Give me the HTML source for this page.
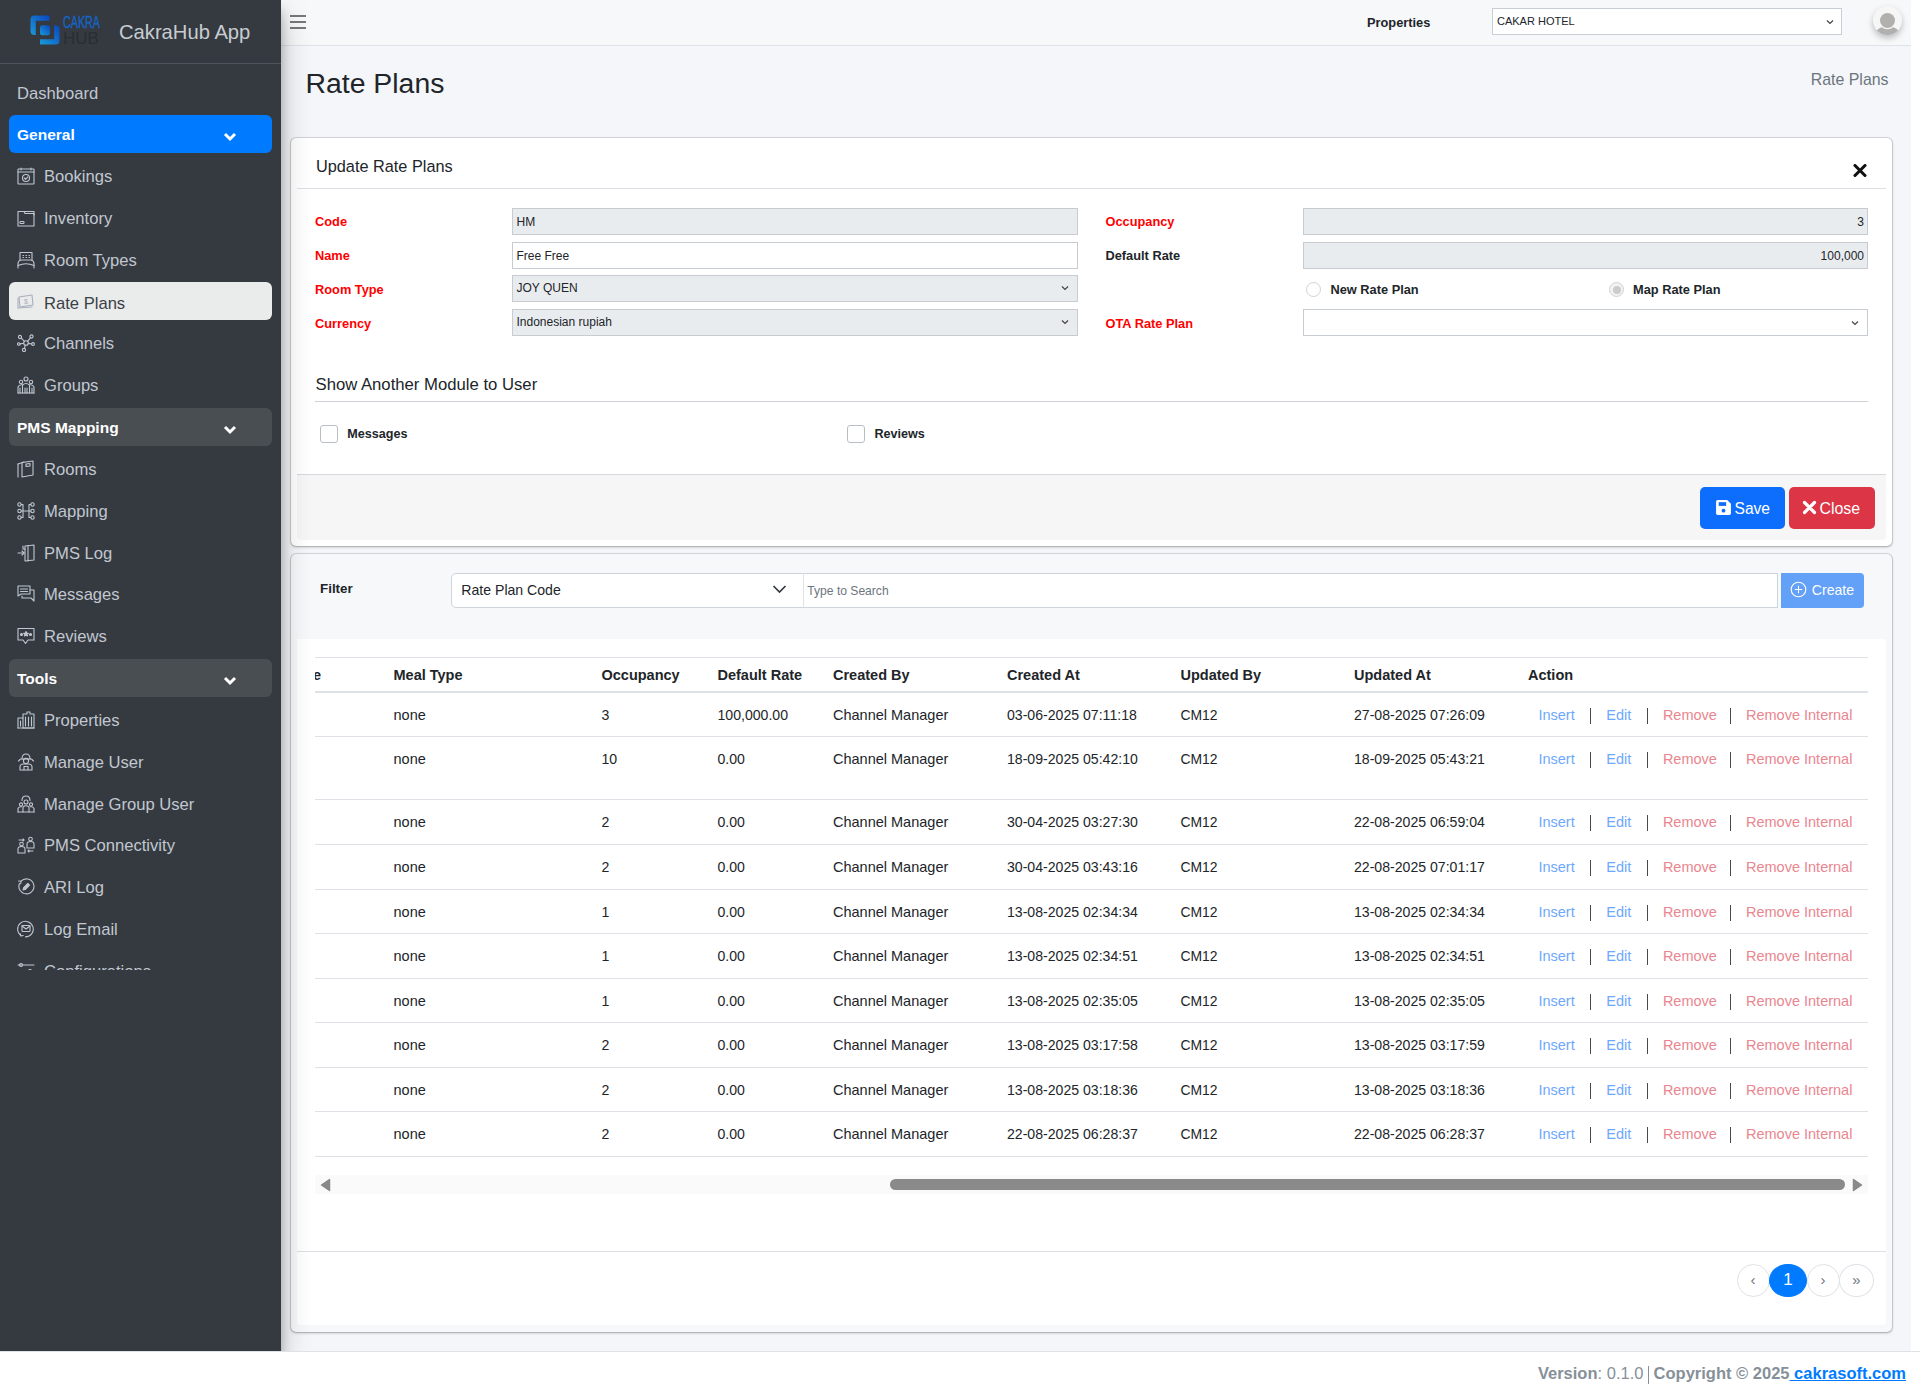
<!DOCTYPE html>
<html>
<head>
<meta charset="utf-8">
<style>
*{box-sizing:border-box;margin:0;padding:0}
html,body{width:1920px;height:1395px;overflow:hidden;background:#fff;font-family:"Liberation Sans",sans-serif;color:#212529}
.abs{position:absolute}
#sidebar{position:absolute;left:0;top:0;width:281px;height:1351px;background:#343a40;z-index:5;box-shadow:0 14px 28px rgba(0,0,0,.25),0 10px 10px rgba(0,0,0,.22)}
#brand{position:absolute;left:0;top:0;width:281px;height:64px;border-bottom:1px solid #4b545c}
#brand .t{position:absolute;left:119px;top:21.4px;font-size:20.2px;color:#c8ccd1;white-space:nowrap;letter-spacing:0}
#nav{position:absolute;left:0;top:64px;width:281px;height:906px;overflow:hidden}
.it{position:absolute;left:9px;width:263px;height:38px;border-radius:6px;color:#c2c7d0;font-size:16.6px;white-space:nowrap}
.it span{position:absolute;left:35px;top:10px}
.it svg{position:absolute;left:8px;top:10px}
.it.hd span,.it.plain span,.it.blue span{left:8px;top:11.3px}
.it.hd{background:#494e53;color:#fff;font-weight:bold;font-size:15.5px}
.it.blue{background:#007bff;color:#fff;font-weight:bold;font-size:15.5px}
.it.active{background:#eaebeb;color:#3a4046}
.it.active span{top:11.2px}
.it .chev{position:absolute;left:214px;top:17px}
#navbar{position:absolute;left:281px;top:0;width:1630px;height:46px;background:#f7f8fa;border-bottom:1px solid #dfe2e6}
#content{position:absolute;left:281px;top:46px;width:1630px;height:1305px;background:#f4f6f9}
#footer{position:absolute;left:0;top:1351px;width:1920px;height:44px;background:#fff;border-top:1px solid #dee2e6;z-index:6}
.t{white-space:nowrap;line-height:normal}
.card{border-radius:5px;box-shadow:0 0 0 1px rgba(0,0,0,.09),0 0 1px rgba(0,0,0,.2),0 1px 3px rgba(0,0,0,.25)}
.inp{border:1px solid #c7ccd2}
.btn{border-radius:5px}
.pg{border:1px solid #dee2e6;border-radius:50%;background:#fff;color:#6c757d;font-size:15px;text-align:center;line-height:29px}
.pg.act{background:#007bff;border-color:#007bff;color:#fff;font-size:17px;line-height:30px}
</style>
</head>
<body>
<div id="content"></div>
<div id="navbar">
  <div class="abs" style="left:9px;top:15px;width:16px;height:2px;background:#787878"></div>
  <div class="abs" style="left:9px;top:21px;width:16px;height:2px;background:#787878"></div>
  <div class="abs" style="left:9px;top:26.5px;width:16px;height:2px;background:#787878"></div>
  <div class="abs" style="left:1086px;top:14.7px;font-size:12.8px;font-weight:bold;color:#212529">Properties</div>
  <div class="abs" style="left:1211px;top:8px;width:350px;height:27px;background:#fff;border:1px solid #c9ced4">
    <div class="abs" style="left:4px;top:5.7px;font-size:11px;color:#212529">CAKAR HOTEL</div>
    <svg class="abs" style="left:333px;top:9.5px" width="8" height="6" viewBox="0 0 8 6"><path d="M1 1.5 L4 4.5 L7 1.5" fill="none" stroke="#444" stroke-width="1.2"/></svg>
  </div>
  <div class="abs" style="left:1592px;top:6px;width:29px;height:29px;border-radius:50%;background:#f6f6f6;box-shadow:0 3px 6px rgba(0,0,0,.25);overflow:hidden">
    <div class="abs" style="left:7px;top:6.5px;width:15px;height:15px;border-radius:50%;background:#b1b0af;box-shadow:0 0 0 1px #f6f6f6"></div>
    <div class="abs" style="left:2px;top:20px;width:25px;height:18px;border-radius:50% 50% 0 0;background:#b1b0af"></div>
    <div class="abs" style="left:7px;top:6.5px;width:15px;height:15px;border-radius:50%;background:#b1b0af;box-shadow:0 0 0 1.2px #f6f6f6"></div>
  </div>
</div>
<div id="footer"></div>
<!--CONTENT-->
<div class="abs t" style="left:305.5px;top:66.8px;font-size:28.4px;color:#212529">Rate Plans</div>
<div class="abs t" style="right:31.5px;top:70.6px;font-size:15.9px;color:#6c757d">Rate Plans</div>
<div class="abs card" style="left:291px;top:138px;width:1601px;height:408px;background:#fff"></div>
<div class="abs t" style="left:316.0px;top:157.0px;font-size:16.3px;color:#212529">Update Rate Plans</div>
<svg class="abs" style="left:1853px;top:164px" width="14" height="13" viewBox="0 0 14 13"><path d="M2 1.5 L12 11.5 M12 1.5 L2 11.5" stroke="#111" stroke-width="3.1" stroke-linecap="round"/></svg>
<div class="abs" style="left:297px;top:188px;width:1589px;height:1px;background:#dcdfe3"></div>
<div class="abs t" style="left:315.0px;top:213.9px;font-size:12.8px;font-weight:bold;color:#ff0000">Code</div>
<div class="abs t" style="left:315.0px;top:247.8px;font-size:12.8px;font-weight:bold;color:#ff0000">Name</div>
<div class="abs t" style="left:315.0px;top:281.6px;font-size:12.8px;font-weight:bold;color:#ff0000">Room Type</div>
<div class="abs t" style="left:315.0px;top:315.5px;font-size:12.8px;font-weight:bold;color:#ff0000">Currency</div>
<div class="abs inp" style="left:512px;top:208px;width:566px;height:27px;background:#e9ecef"></div>
<div class="abs t" style="left:516.5px;top:214.6px;font-size:12px;color:#212529">HM</div>
<div class="abs inp" style="left:512px;top:242px;width:566px;height:27px;background:#fff"></div>
<div class="abs t" style="left:516.5px;top:248.6px;font-size:12px;color:#212529">Free Free</div>
<div class="abs inp" style="left:512px;top:275px;width:566px;height:27px;background:#e9ecef"></div>
<div class="abs t" style="left:516.5px;top:281.2px;font-size:12px;color:#212529">JOY QUEN</div>
<svg class="abs" style="left:1061px;top:284.5px" width="8" height="6" viewBox="0 0 8 6"><path d="M1 1.5 L4 4.5 L7 1.5" fill="none" stroke="#444" stroke-width="1.2"/></svg>
<div class="abs inp" style="left:512px;top:309px;width:566px;height:27px;background:#e9ecef"></div>
<div class="abs t" style="left:516.5px;top:315.2px;font-size:12px;color:#212529">Indonesian rupiah</div>
<svg class="abs" style="left:1061px;top:318.5px" width="8" height="6" viewBox="0 0 8 6"><path d="M1 1.5 L4 4.5 L7 1.5" fill="none" stroke="#444" stroke-width="1.2"/></svg>
<div class="abs t" style="left:1105.5px;top:213.9px;font-size:12.8px;font-weight:bold;color:#ff0000">Occupancy</div>
<div class="abs t" style="left:1105.5px;top:247.8px;font-size:12.8px;font-weight:bold;color:#212529">Default Rate</div>
<div class="abs t" style="left:1105.5px;top:315.5px;font-size:12.8px;font-weight:bold;color:#ff0000">OTA Rate Plan</div>
<div class="abs inp" style="left:1303px;top:208px;width:565px;height:27px;background:#e9ecef"></div>
<div class="abs t" style="right:56.0px;top:214.6px;font-size:12px;color:#212529">3</div>
<div class="abs inp" style="left:1303px;top:242px;width:565px;height:27px;background:#e9ecef"></div>
<div class="abs t" style="right:56.0px;top:248.6px;font-size:12px;color:#212529">100,000</div>
<div class="abs inp" style="left:1303px;top:309px;width:565px;height:27px;background:#fff"></div>
<svg class="abs" style="left:1851px;top:320px" width="8" height="6" viewBox="0 0 8 6"><path d="M1 1.5 L4 4.5 L7 1.5" fill="none" stroke="#444" stroke-width="1.2"/></svg>
<div class="abs" style="left:1306px;top:282px;width:15px;height:15px;border-radius:50%;border:1px solid #cfd2d6;background:#fff"></div>
<div class="abs t" style="left:1330.5px;top:282.4px;font-size:12.8px;font-weight:bold;color:#212529">New Rate Plan</div>
<div class="abs" style="left:1609px;top:282px;width:15px;height:15px;border-radius:50%;border:1px solid #cfd2d6;background:#f2f2f2"><div class="abs" style="left:2.5px;top:2.5px;width:8px;height:8px;border-radius:50%;background:#cbcbcb"></div></div>
<div class="abs t" style="left:1633.0px;top:282.4px;font-size:12.8px;font-weight:bold;color:#212529">Map Rate Plan</div>
<div class="abs t" style="left:315.5px;top:374.6px;font-size:16.7px;color:#212529">Show Another Module to User</div>
<div class="abs" style="left:315px;top:401px;width:1553px;height:1px;background:#ced2d6"></div>
<div class="abs" style="left:320px;top:425px;width:18px;height:18px;border-radius:3px;border:1px solid #b9bec4;background:#fff"></div>
<div class="abs t" style="left:347.3px;top:427.2px;font-size:12.6px;font-weight:bold;color:#212529">Messages</div>
<div class="abs" style="left:847px;top:425px;width:18px;height:18px;border-radius:3px;border:1px solid #b9bec4;background:#fff"></div>
<div class="abs t" style="left:874.4px;top:427.2px;font-size:12.6px;font-weight:bold;color:#212529">Reviews</div>
<div class="abs" style="left:297px;top:474px;width:1589px;height:66px;background:#f6f6f6;border-top:1px solid #d5d8dc;border-radius:0 0 4px 4px"></div>
<div class="abs btn" style="left:1700px;top:487px;width:85px;height:42px;background:#0d6efd"></div>
<svg class="abs" style="left:1714.5px;top:499px" width="17" height="17" viewBox="0 0 16 16"><path d="M1 2.5 Q1 1 2.5 1 L11.5 1 L15 4.5 L15 13.5 Q15 15 13.5 15 L2.5 15 Q1 15 1 13.5 Z" fill="#fff"/><rect x="3.5" y="3" width="7" height="3.5" fill="#0d6efd"/><circle cx="8" cy="11" r="1.8" fill="#0d6efd"/></svg>
<div class="abs t" style="left:1734.5px;top:500.1px;font-size:15.6px;color:#fff">Save</div>
<div class="abs btn" style="left:1789px;top:487px;width:86px;height:42px;background:#dc3545"></div>
<svg class="abs" style="left:1802px;top:500px" width="15" height="15" viewBox="0 0 15 15"><path d="M2.5 2.5 L12.5 12.5 M12.5 2.5 L2.5 12.5" stroke="#fff" stroke-width="3.2" stroke-linecap="round"/></svg>
<div class="abs t" style="left:1819.5px;top:500.4px;font-size:15.9px;color:#fff">Close</div>
<div class="abs card" style="left:291px;top:554px;width:1601px;height:778px;background:#f7f8fa"></div>
<div class="abs t" style="left:320.0px;top:581.4px;font-size:13.4px;font-weight:bold;color:#212529">Filter</div>
<div class="abs" style="left:450.5px;top:573px;width:353px;height:35px;background:#fff;border:1px solid #ced4da;border-radius:5px 0 0 5px"></div>
<div class="abs t" style="left:461.3px;top:582.0px;font-size:14.1px;color:#212529">Rate Plan Code</div>
<svg class="abs" style="left:772px;top:584px" width="15" height="10" viewBox="0 0 15 10"><path d="M1.5 2 L7.5 8 L13.5 2" fill="none" stroke="#343a40" stroke-width="1.7"/></svg>
<div class="abs" style="left:802.5px;top:573px;width:975.5px;height:35px;background:#fff;border:1px solid #ced4da;border-left-color:#dfe3e7"></div>
<div class="abs t" style="left:807.3px;top:583.9px;font-size:12.1px;color:#6c757d">Type to Search</div>
<div class="abs" style="left:1781px;top:573px;width:83px;height:35px;background:#63a0f8;border-radius:0 4px 4px 0"></div>
<svg class="abs" style="left:1790px;top:581px" width="17" height="17" viewBox="0 0 17 17"><circle cx="8.5" cy="8.5" r="7.3" fill="none" stroke="#fff" stroke-width="1.1"/><path d="M8.5 4.8 L8.5 12.2 M4.8 8.5 L12.2 8.5" stroke="#fff" stroke-width="1.1"/></svg>
<div class="abs t" style="left:1811.8px;top:582.0px;font-size:14.1px;color:#fff">Create</div>
<div class="abs" style="left:297px;top:639px;width:1589px;height:686px;background:#fff;border-radius:0 0 4px 4px"></div>
<div class="abs" style="left:315px;top:657px;width:1553px;height:1px;background:#dee2e6"></div>
<div class="abs" style="left:315px;top:691px;width:1553px;height:2px;background:#dee2e6"></div>
<div class="abs" style="left:315px;top:650px;width:6px;height:40px;overflow:hidden"><div class="abs t" style="right:0;top:16.5px;font-size:14.5px;font-weight:bold;color:#212529">Name</div></div>
<div class="abs t" style="left:393.5px;top:666.5px;font-size:14.5px;font-weight:bold;color:#212529">Meal Type</div>
<div class="abs t" style="left:601.5px;top:666.5px;font-size:14.5px;font-weight:bold;color:#212529">Occupancy</div>
<div class="abs t" style="left:717.5px;top:666.5px;font-size:14.5px;font-weight:bold;color:#212529">Default Rate</div>
<div class="abs t" style="left:833.0px;top:666.5px;font-size:14.5px;font-weight:bold;color:#212529">Created By</div>
<div class="abs t" style="left:1007.0px;top:666.5px;font-size:14.5px;font-weight:bold;color:#212529">Created At</div>
<div class="abs t" style="left:1180.5px;top:666.5px;font-size:14.5px;font-weight:bold;color:#212529">Updated By</div>
<div class="abs t" style="left:1354.0px;top:666.5px;font-size:14.5px;font-weight:bold;color:#212529">Updated At</div>
<div class="abs t" style="left:1528.0px;top:666.5px;font-size:14.5px;font-weight:bold;color:#212529">Action</div>
<div class="abs" style="left:315px;top:736px;width:1553px;height:1px;background:#dee2e6"></div>
<div class="abs" style="left:315px;top:799px;width:1553px;height:1px;background:#dee2e6"></div>
<div class="abs" style="left:315px;top:844px;width:1553px;height:1px;background:#dee2e6"></div>
<div class="abs" style="left:315px;top:889px;width:1553px;height:1px;background:#dee2e6"></div>
<div class="abs" style="left:315px;top:933px;width:1553px;height:1px;background:#dee2e6"></div>
<div class="abs" style="left:315px;top:978px;width:1553px;height:1px;background:#dee2e6"></div>
<div class="abs" style="left:315px;top:1022px;width:1553px;height:1px;background:#dee2e6"></div>
<div class="abs" style="left:315px;top:1067px;width:1553px;height:1px;background:#dee2e6"></div>
<div class="abs" style="left:315px;top:1111px;width:1553px;height:1px;background:#dee2e6"></div>
<div class="abs" style="left:315px;top:1156px;width:1553px;height:1px;background:#dee2e6"></div>
<div class="abs t" style="left:393.5px;top:706.6px;font-size:14.5px;color:#212529">none</div>
<div class="abs t" style="left:601.5px;top:707.0px;font-size:14.1px;color:#212529">3</div>
<div class="abs t" style="left:717.5px;top:707.0px;font-size:14.1px;color:#212529">100,000.00</div>
<div class="abs t" style="left:833.0px;top:706.6px;font-size:14.5px;color:#212529">Channel Manager</div>
<div class="abs t" style="left:1007.0px;top:707.0px;font-size:14.1px;color:#212529">03-06-2025 07:11:18</div>
<div class="abs t" style="left:1180.5px;top:707.2px;font-size:13.9px;color:#212529">CM12</div>
<div class="abs t" style="left:1354.0px;top:707.0px;font-size:14.1px;color:#212529">27-08-2025 07:26:09</div>
<div class="abs t" style="left:1538.4px;top:706.6px;font-size:14.5px;color:#6ea8fe">Insert</div>
<div class="abs t" style="left:1606.3px;top:706.6px;font-size:14.5px;color:#6ea8fe">Edit</div>
<div class="abs t" style="left:1662.9px;top:706.6px;font-size:14.5px;color:#ea868f">Remove</div>
<div class="abs t" style="left:1746.0px;top:706.6px;font-size:14.5px;color:#ea868f">Remove Internal</div>
<div class="abs" style="left:1590.2px;top:708px;width:1.3px;height:16px;background:#444a50"></div>
<div class="abs" style="left:1646.5px;top:708px;width:1.3px;height:16px;background:#444a50"></div>
<div class="abs" style="left:1730px;top:708px;width:1.3px;height:16px;background:#444a50"></div>
<div class="abs t" style="left:393.5px;top:750.6px;font-size:14.5px;color:#212529">none</div>
<div class="abs t" style="left:601.5px;top:751.0px;font-size:14.1px;color:#212529">10</div>
<div class="abs t" style="left:717.5px;top:751.0px;font-size:14.1px;color:#212529">0.00</div>
<div class="abs t" style="left:833.0px;top:750.6px;font-size:14.5px;color:#212529">Channel Manager</div>
<div class="abs t" style="left:1007.0px;top:751.0px;font-size:14.1px;color:#212529">18-09-2025 05:42:10</div>
<div class="abs t" style="left:1180.5px;top:751.2px;font-size:13.9px;color:#212529">CM12</div>
<div class="abs t" style="left:1354.0px;top:751.0px;font-size:14.1px;color:#212529">18-09-2025 05:43:21</div>
<div class="abs t" style="left:1538.4px;top:750.6px;font-size:14.5px;color:#6ea8fe">Insert</div>
<div class="abs t" style="left:1606.3px;top:750.6px;font-size:14.5px;color:#6ea8fe">Edit</div>
<div class="abs t" style="left:1662.9px;top:750.6px;font-size:14.5px;color:#ea868f">Remove</div>
<div class="abs t" style="left:1746.0px;top:750.6px;font-size:14.5px;color:#ea868f">Remove Internal</div>
<div class="abs" style="left:1590.2px;top:752px;width:1.3px;height:16px;background:#444a50"></div>
<div class="abs" style="left:1646.5px;top:752px;width:1.3px;height:16px;background:#444a50"></div>
<div class="abs" style="left:1730px;top:752px;width:1.3px;height:16px;background:#444a50"></div>
<div class="abs t" style="left:393.5px;top:813.6px;font-size:14.5px;color:#212529">none</div>
<div class="abs t" style="left:601.5px;top:814.0px;font-size:14.1px;color:#212529">2</div>
<div class="abs t" style="left:717.5px;top:814.0px;font-size:14.1px;color:#212529">0.00</div>
<div class="abs t" style="left:833.0px;top:813.6px;font-size:14.5px;color:#212529">Channel Manager</div>
<div class="abs t" style="left:1007.0px;top:814.0px;font-size:14.1px;color:#212529">30-04-2025 03:27:30</div>
<div class="abs t" style="left:1180.5px;top:814.2px;font-size:13.9px;color:#212529">CM12</div>
<div class="abs t" style="left:1354.0px;top:814.0px;font-size:14.1px;color:#212529">22-08-2025 06:59:04</div>
<div class="abs t" style="left:1538.4px;top:813.6px;font-size:14.5px;color:#6ea8fe">Insert</div>
<div class="abs t" style="left:1606.3px;top:813.6px;font-size:14.5px;color:#6ea8fe">Edit</div>
<div class="abs t" style="left:1662.9px;top:813.6px;font-size:14.5px;color:#ea868f">Remove</div>
<div class="abs t" style="left:1746.0px;top:813.6px;font-size:14.5px;color:#ea868f">Remove Internal</div>
<div class="abs" style="left:1590.2px;top:815px;width:1.3px;height:16px;background:#444a50"></div>
<div class="abs" style="left:1646.5px;top:815px;width:1.3px;height:16px;background:#444a50"></div>
<div class="abs" style="left:1730px;top:815px;width:1.3px;height:16px;background:#444a50"></div>
<div class="abs t" style="left:393.5px;top:858.6px;font-size:14.5px;color:#212529">none</div>
<div class="abs t" style="left:601.5px;top:859.0px;font-size:14.1px;color:#212529">2</div>
<div class="abs t" style="left:717.5px;top:859.0px;font-size:14.1px;color:#212529">0.00</div>
<div class="abs t" style="left:833.0px;top:858.6px;font-size:14.5px;color:#212529">Channel Manager</div>
<div class="abs t" style="left:1007.0px;top:859.0px;font-size:14.1px;color:#212529">30-04-2025 03:43:16</div>
<div class="abs t" style="left:1180.5px;top:859.2px;font-size:13.9px;color:#212529">CM12</div>
<div class="abs t" style="left:1354.0px;top:859.0px;font-size:14.1px;color:#212529">22-08-2025 07:01:17</div>
<div class="abs t" style="left:1538.4px;top:858.6px;font-size:14.5px;color:#6ea8fe">Insert</div>
<div class="abs t" style="left:1606.3px;top:858.6px;font-size:14.5px;color:#6ea8fe">Edit</div>
<div class="abs t" style="left:1662.9px;top:858.6px;font-size:14.5px;color:#ea868f">Remove</div>
<div class="abs t" style="left:1746.0px;top:858.6px;font-size:14.5px;color:#ea868f">Remove Internal</div>
<div class="abs" style="left:1590.2px;top:860px;width:1.3px;height:16px;background:#444a50"></div>
<div class="abs" style="left:1646.5px;top:860px;width:1.3px;height:16px;background:#444a50"></div>
<div class="abs" style="left:1730px;top:860px;width:1.3px;height:16px;background:#444a50"></div>
<div class="abs t" style="left:393.5px;top:903.6px;font-size:14.5px;color:#212529">none</div>
<div class="abs t" style="left:601.5px;top:904.0px;font-size:14.1px;color:#212529">1</div>
<div class="abs t" style="left:717.5px;top:904.0px;font-size:14.1px;color:#212529">0.00</div>
<div class="abs t" style="left:833.0px;top:903.6px;font-size:14.5px;color:#212529">Channel Manager</div>
<div class="abs t" style="left:1007.0px;top:904.0px;font-size:14.1px;color:#212529">13-08-2025 02:34:34</div>
<div class="abs t" style="left:1180.5px;top:904.2px;font-size:13.9px;color:#212529">CM12</div>
<div class="abs t" style="left:1354.0px;top:904.0px;font-size:14.1px;color:#212529">13-08-2025 02:34:34</div>
<div class="abs t" style="left:1538.4px;top:903.6px;font-size:14.5px;color:#6ea8fe">Insert</div>
<div class="abs t" style="left:1606.3px;top:903.6px;font-size:14.5px;color:#6ea8fe">Edit</div>
<div class="abs t" style="left:1662.9px;top:903.6px;font-size:14.5px;color:#ea868f">Remove</div>
<div class="abs t" style="left:1746.0px;top:903.6px;font-size:14.5px;color:#ea868f">Remove Internal</div>
<div class="abs" style="left:1590.2px;top:905px;width:1.3px;height:16px;background:#444a50"></div>
<div class="abs" style="left:1646.5px;top:905px;width:1.3px;height:16px;background:#444a50"></div>
<div class="abs" style="left:1730px;top:905px;width:1.3px;height:16px;background:#444a50"></div>
<div class="abs t" style="left:393.5px;top:947.6px;font-size:14.5px;color:#212529">none</div>
<div class="abs t" style="left:601.5px;top:948.0px;font-size:14.1px;color:#212529">1</div>
<div class="abs t" style="left:717.5px;top:948.0px;font-size:14.1px;color:#212529">0.00</div>
<div class="abs t" style="left:833.0px;top:947.6px;font-size:14.5px;color:#212529">Channel Manager</div>
<div class="abs t" style="left:1007.0px;top:948.0px;font-size:14.1px;color:#212529">13-08-2025 02:34:51</div>
<div class="abs t" style="left:1180.5px;top:948.2px;font-size:13.9px;color:#212529">CM12</div>
<div class="abs t" style="left:1354.0px;top:948.0px;font-size:14.1px;color:#212529">13-08-2025 02:34:51</div>
<div class="abs t" style="left:1538.4px;top:947.6px;font-size:14.5px;color:#6ea8fe">Insert</div>
<div class="abs t" style="left:1606.3px;top:947.6px;font-size:14.5px;color:#6ea8fe">Edit</div>
<div class="abs t" style="left:1662.9px;top:947.6px;font-size:14.5px;color:#ea868f">Remove</div>
<div class="abs t" style="left:1746.0px;top:947.6px;font-size:14.5px;color:#ea868f">Remove Internal</div>
<div class="abs" style="left:1590.2px;top:949px;width:1.3px;height:16px;background:#444a50"></div>
<div class="abs" style="left:1646.5px;top:949px;width:1.3px;height:16px;background:#444a50"></div>
<div class="abs" style="left:1730px;top:949px;width:1.3px;height:16px;background:#444a50"></div>
<div class="abs t" style="left:393.5px;top:992.6px;font-size:14.5px;color:#212529">none</div>
<div class="abs t" style="left:601.5px;top:993.0px;font-size:14.1px;color:#212529">1</div>
<div class="abs t" style="left:717.5px;top:993.0px;font-size:14.1px;color:#212529">0.00</div>
<div class="abs t" style="left:833.0px;top:992.6px;font-size:14.5px;color:#212529">Channel Manager</div>
<div class="abs t" style="left:1007.0px;top:993.0px;font-size:14.1px;color:#212529">13-08-2025 02:35:05</div>
<div class="abs t" style="left:1180.5px;top:993.2px;font-size:13.9px;color:#212529">CM12</div>
<div class="abs t" style="left:1354.0px;top:993.0px;font-size:14.1px;color:#212529">13-08-2025 02:35:05</div>
<div class="abs t" style="left:1538.4px;top:992.6px;font-size:14.5px;color:#6ea8fe">Insert</div>
<div class="abs t" style="left:1606.3px;top:992.6px;font-size:14.5px;color:#6ea8fe">Edit</div>
<div class="abs t" style="left:1662.9px;top:992.6px;font-size:14.5px;color:#ea868f">Remove</div>
<div class="abs t" style="left:1746.0px;top:992.6px;font-size:14.5px;color:#ea868f">Remove Internal</div>
<div class="abs" style="left:1590.2px;top:994px;width:1.3px;height:16px;background:#444a50"></div>
<div class="abs" style="left:1646.5px;top:994px;width:1.3px;height:16px;background:#444a50"></div>
<div class="abs" style="left:1730px;top:994px;width:1.3px;height:16px;background:#444a50"></div>
<div class="abs t" style="left:393.5px;top:1036.6px;font-size:14.5px;color:#212529">none</div>
<div class="abs t" style="left:601.5px;top:1037.0px;font-size:14.1px;color:#212529">2</div>
<div class="abs t" style="left:717.5px;top:1037.0px;font-size:14.1px;color:#212529">0.00</div>
<div class="abs t" style="left:833.0px;top:1036.6px;font-size:14.5px;color:#212529">Channel Manager</div>
<div class="abs t" style="left:1007.0px;top:1037.0px;font-size:14.1px;color:#212529">13-08-2025 03:17:58</div>
<div class="abs t" style="left:1180.5px;top:1037.2px;font-size:13.9px;color:#212529">CM12</div>
<div class="abs t" style="left:1354.0px;top:1037.0px;font-size:14.1px;color:#212529">13-08-2025 03:17:59</div>
<div class="abs t" style="left:1538.4px;top:1036.6px;font-size:14.5px;color:#6ea8fe">Insert</div>
<div class="abs t" style="left:1606.3px;top:1036.6px;font-size:14.5px;color:#6ea8fe">Edit</div>
<div class="abs t" style="left:1662.9px;top:1036.6px;font-size:14.5px;color:#ea868f">Remove</div>
<div class="abs t" style="left:1746.0px;top:1036.6px;font-size:14.5px;color:#ea868f">Remove Internal</div>
<div class="abs" style="left:1590.2px;top:1038px;width:1.3px;height:16px;background:#444a50"></div>
<div class="abs" style="left:1646.5px;top:1038px;width:1.3px;height:16px;background:#444a50"></div>
<div class="abs" style="left:1730px;top:1038px;width:1.3px;height:16px;background:#444a50"></div>
<div class="abs t" style="left:393.5px;top:1081.6px;font-size:14.5px;color:#212529">none</div>
<div class="abs t" style="left:601.5px;top:1082.0px;font-size:14.1px;color:#212529">2</div>
<div class="abs t" style="left:717.5px;top:1082.0px;font-size:14.1px;color:#212529">0.00</div>
<div class="abs t" style="left:833.0px;top:1081.6px;font-size:14.5px;color:#212529">Channel Manager</div>
<div class="abs t" style="left:1007.0px;top:1082.0px;font-size:14.1px;color:#212529">13-08-2025 03:18:36</div>
<div class="abs t" style="left:1180.5px;top:1082.2px;font-size:13.9px;color:#212529">CM12</div>
<div class="abs t" style="left:1354.0px;top:1082.0px;font-size:14.1px;color:#212529">13-08-2025 03:18:36</div>
<div class="abs t" style="left:1538.4px;top:1081.6px;font-size:14.5px;color:#6ea8fe">Insert</div>
<div class="abs t" style="left:1606.3px;top:1081.6px;font-size:14.5px;color:#6ea8fe">Edit</div>
<div class="abs t" style="left:1662.9px;top:1081.6px;font-size:14.5px;color:#ea868f">Remove</div>
<div class="abs t" style="left:1746.0px;top:1081.6px;font-size:14.5px;color:#ea868f">Remove Internal</div>
<div class="abs" style="left:1590.2px;top:1083px;width:1.3px;height:16px;background:#444a50"></div>
<div class="abs" style="left:1646.5px;top:1083px;width:1.3px;height:16px;background:#444a50"></div>
<div class="abs" style="left:1730px;top:1083px;width:1.3px;height:16px;background:#444a50"></div>
<div class="abs t" style="left:393.5px;top:1125.6px;font-size:14.5px;color:#212529">none</div>
<div class="abs t" style="left:601.5px;top:1126.0px;font-size:14.1px;color:#212529">2</div>
<div class="abs t" style="left:717.5px;top:1126.0px;font-size:14.1px;color:#212529">0.00</div>
<div class="abs t" style="left:833.0px;top:1125.6px;font-size:14.5px;color:#212529">Channel Manager</div>
<div class="abs t" style="left:1007.0px;top:1126.0px;font-size:14.1px;color:#212529">22-08-2025 06:28:37</div>
<div class="abs t" style="left:1180.5px;top:1126.2px;font-size:13.9px;color:#212529">CM12</div>
<div class="abs t" style="left:1354.0px;top:1126.0px;font-size:14.1px;color:#212529">22-08-2025 06:28:37</div>
<div class="abs t" style="left:1538.4px;top:1125.6px;font-size:14.5px;color:#6ea8fe">Insert</div>
<div class="abs t" style="left:1606.3px;top:1125.6px;font-size:14.5px;color:#6ea8fe">Edit</div>
<div class="abs t" style="left:1662.9px;top:1125.6px;font-size:14.5px;color:#ea868f">Remove</div>
<div class="abs t" style="left:1746.0px;top:1125.6px;font-size:14.5px;color:#ea868f">Remove Internal</div>
<div class="abs" style="left:1590.2px;top:1127px;width:1.3px;height:16px;background:#444a50"></div>
<div class="abs" style="left:1646.5px;top:1127px;width:1.3px;height:16px;background:#444a50"></div>
<div class="abs" style="left:1730px;top:1127px;width:1.3px;height:16px;background:#444a50"></div>
<div class="abs" style="left:315px;top:1175px;width:1553px;height:19px;background:#fafafa"></div>
<svg class="abs" style="left:320px;top:1178px" width="11" height="14" viewBox="0 0 11 14"><path d="M9.5 1.5 L1.5 7 L9.5 12.5 Z" fill="#898989" stroke="#898989" stroke-width="1.5" stroke-linejoin="round"/></svg>
<div class="abs" style="left:890px;top:1179px;width:955px;height:11px;border-radius:6px;background:#8a8a8a"></div>
<svg class="abs" style="left:1852px;top:1178px" width="11" height="14" viewBox="0 0 11 14"><path d="M1.5 1.5 L9.5 7 L1.5 12.5 Z" fill="#898989" stroke="#898989" stroke-width="1.5" stroke-linejoin="round"/></svg>
<div class="abs" style="left:297px;top:1251px;width:1589px;height:1px;background:#dcdfe3"></div>
<div class="abs pg" style="left:1736.5px;top:1264px;width:33px;height:33px">&lsaquo;</div>
<div class="abs pg" style="left:1806.5px;top:1264px;width:33px;height:33px">&rsaquo;</div>
<div class="abs pg" style="left:1839px;top:1264px;width:35px;height:33px">&raquo;</div>
<div class="abs pg act" style="left:1769px;top:1263.5px;width:38px;height:33.5px">1</div>
<div class="abs t" style="right:14.0px;top:1363.8px;font-size:16.5px;color:#869099;z-index:7"><b>Version</b>: 0.1.0 <span style="display:inline-block;width:1px;height:18px;background:#869099;vertical-align:-5px"></span> <b>Copyright &copy; 2025</b><a style="color:#007bff;font-weight:bold;text-decoration:underline"> cakrasoft.com</a></div>
<!--/CONTENT-->
<div id="sidebar">
  <div id="brand">
    <svg class="abs" style="left:30px;top:14.5px" width="72" height="32" viewBox="0 0 72 32">
      <defs><linearGradient id="lg" x1="0" y1="1" x2="1" y2="0"><stop offset="0" stop-color="#1a9ad6"/><stop offset="1" stop-color="#0b46c0"/></linearGradient></defs>
      <path d="M0.5 4.5 Q0.5 0.5 4.5 0.5 L19.5 0.5 L19.5 5.8 L5.8 5.8 L5.8 20 L4.5 20 Q0.5 20 0.5 16 Z" fill="url(#lg)"/>
      <rect x="10" y="10.3" width="10" height="10" rx="2.5" fill="url(#lg)"/>
      <path d="M25 10.3 Q29.5 10.3 29.5 14.3 L29.5 25.5 Q29.5 29.5 25.5 29.5 L10 29.5 L10 24.2 L24.2 24.2 L24.2 10.3 Z" fill="url(#lg)"/>
      <text x="33" y="12.6" font-family="Liberation Sans" font-size="17.3" fill="#1763c2" stroke="#1763c2" stroke-width="0.45" textLength="37" lengthAdjust="spacingAndGlyphs">CAKRA</text>
      <text x="33" y="28.6" font-family="Liberation Sans" font-size="16.6" fill="#2a2d31" textLength="36" lengthAdjust="spacingAndGlyphs">HUB</text>
    </svg>
    <div class="t">CakraHub App</div>
  </div>
  <div id="nav">
<div class="it plain" style="top:9.15px"><span>Dashboard</span></div>
<div class="it blue" style="top:51.00px"><span>General</span><svg class="chev" width="14" height="10" viewBox="0 0 14 10"><path d="M2 2 L7 7 L12 2" fill="none" stroke="#fff" stroke-width="3"/></svg></div>
<div class="it" style="top:92.85px"><svg width="18" height="18" viewBox="0 0 18 18" fill="none" stroke="#c2c7d0" stroke-width="1.1" stroke-linecap="round" stroke-linejoin="round"><rect x="1" y="2" width="16" height="15" rx="0.5"/><line x1="1" y1="5" x2="17" y2="5"/><line x1="4" y1="1" x2="4" y2="3"/><line x1="14" y1="1" x2="14" y2="3"/><circle cx="9" cy="11" r="3.5"/><path d="M7.3 11 L8.6 12.3 L10.8 9.8"/></svg><span>Bookings</span></div>
<div class="it" style="top:134.70px"><svg width="18" height="18" viewBox="0 0 18 18" fill="none" stroke="#c2c7d0" stroke-width="1.1" stroke-linecap="round" stroke-linejoin="round"><path d="M1 17 L1 2.5 L7 2.5 L8 4.5 L17 4.5 L17 17 Z"/><path d="M7 2.5 L17 2.5 L17 6"/><rect x="3" y="12.5" width="4" height="2" rx="0.8"/></svg><span>Inventory</span></div>
<div class="it" style="top:176.55px"><svg width="18" height="18" viewBox="0 0 18 18" fill="none" stroke="#c2c7d0" stroke-width="1.1" stroke-linecap="round" stroke-linejoin="round"><path d="M3 9 L3 1.5 L15 1.5 L15 9"/><path d="M1 17 L1 13 Q1 9 5 9 L13 9 Q17 9 17 13 L17 17"/><path d="M1 14.5 Q9 11 17 14.5"/><line x1="6" y1="4.5" x2="6.5" y2="4.5"/><line x1="9" y1="4.5" x2="9.5" y2="4.5"/><line x1="12" y1="4.5" x2="12.5" y2="4.5"/><line x1="6" y1="6.5" x2="6.5" y2="6.5"/><line x1="9" y1="6.5" x2="9.5" y2="6.5"/><line x1="12" y1="6.5" x2="12.5" y2="6.5"/></svg><span>Room Types</span></div>
<div class="it active" style="top:218.40px"><svg width="18" height="18" viewBox="0 0 18 18" fill="none" stroke="#a8b0bd" stroke-width="1.1" stroke-linecap="round" stroke-linejoin="round"><path d="M2 5 L15 3 L16 13 L3 15 Z"/><path d="M1 6 L1 16 L15 15"/><text x="7" y="12" font-size="7" fill="#a8b0bd" stroke="none" font-family="Liberation Sans">$</text></svg><span>Rate Plans</span></div>
<div class="it" style="top:260.25px"><svg width="18" height="18" viewBox="0 0 18 18" fill="none" stroke="#c2c7d0" stroke-width="1.1" stroke-linecap="round" stroke-linejoin="round"><circle cx="9" cy="9" r="2.3"/><circle cx="3" cy="3" r="1.6"/><circle cx="14.5" cy="2.5" r="1.6"/><circle cx="1.8" cy="10" r="1.3"/><circle cx="16" cy="10" r="1.4"/><circle cx="7" cy="16" r="1.6"/><line x1="4.2" y1="4.2" x2="7.5" y2="7.3"/><line x1="13.3" y1="3.8" x2="10.6" y2="7.3"/><line x1="3.1" y1="9.9" x2="6.7" y2="9.3"/><line x1="11.3" y1="9.4" x2="14.6" y2="10"/><line x1="8.3" y1="11.2" x2="7.4" y2="14.4"/></svg><span>Channels</span></div>
<div class="it" style="top:302.10px"><svg width="18" height="18" viewBox="0 0 18 18" fill="none" stroke="#c2c7d0" stroke-width="1.1" stroke-linecap="round" stroke-linejoin="round"><circle cx="9" cy="3" r="2"/><circle cx="4" cy="6" r="1.7"/><circle cx="14" cy="6" r="1.7"/><path d="M5.5 17 L5.5 9 Q9 6 12.5 9 L12.5 17"/><path d="M1 17 L1 11 Q2 8.5 5 8.8"/><path d="M17 17 L17 11 Q16 8.5 13 8.8"/><line x1="1" y1="17" x2="17" y2="17"/><line x1="3" y1="12" x2="3" y2="17"/><line x1="15" y1="12" x2="15" y2="17"/><line x1="8" y1="12" x2="8" y2="17"/><line x1="10" y1="12" x2="10" y2="17"/></svg><span>Groups</span></div>
<div class="it hd" style="top:343.95px"><span>PMS Mapping</span><svg class="chev" width="14" height="10" viewBox="0 0 14 10"><path d="M2 2 L7 7 L12 2" fill="none" stroke="#fff" stroke-width="3"/></svg></div>
<div class="it" style="top:385.80px"><svg width="18" height="18" viewBox="0 0 18 18" fill="none" stroke="#c2c7d0" stroke-width="1.1" stroke-linecap="round" stroke-linejoin="round"><path d="M1 4 L1 17"/><path d="M1 4 L7 2"/><path d="M5 2.5 L16 1 L16 15 L5 17 Z"/><path d="M9 4 L13 3.5 L13 6 L9 6.5 Z"/></svg><span>Rooms</span></div>
<div class="it" style="top:427.65px"><svg width="18" height="18" viewBox="0 0 18 18" fill="none" stroke="#c2c7d0" stroke-width="1.1" stroke-linecap="round" stroke-linejoin="round"><circle cx="2.5" cy="2.5" r="1.7"/><circle cx="15.5" cy="2.5" r="1.7"/><circle cx="2.5" cy="9" r="1.7"/><circle cx="15.5" cy="9" r="1.7"/><circle cx="2.5" cy="15.5" r="1.7"/><circle cx="15.5" cy="15.5" r="1.7"/><path d="M4.2 2.5 L6 2.5 L6 15.5 L4.2 15.5"/><path d="M13.8 2.5 L12 2.5 L12 15.5 L13.8 15.5"/><line x1="4.2" y1="9" x2="13.8" y2="9"/></svg><span>Mapping</span></div>
<div class="it" style="top:469.50px"><svg width="18" height="18" viewBox="0 0 18 18" fill="none" stroke="#c2c7d0" stroke-width="1.1" stroke-linecap="round" stroke-linejoin="round"><path d="M8 2 L17 1 L17 16 L8 17 Z"/><path d="M11 1.5 L11 17"/><line x1="1" y1="9" x2="7" y2="9"/><path d="M5 7 L7 9 L5 11"/><path d="M8 5 L6 5 L6 2"/></svg><span>PMS Log</span></div>
<div class="it" style="top:511.35px"><svg width="18" height="18" viewBox="0 0 18 18" fill="none" stroke="#c2c7d0" stroke-width="1.1" stroke-linecap="round" stroke-linejoin="round"><path d="M1 1 L13 1 L13 9 L4 9 L1 11 Z"/><path d="M5 11 L5 13 L14 13 L17 16 L17 5 L13 5"/><line x1="3.5" y1="4" x2="10.5" y2="4"/><line x1="3.5" y1="6.5" x2="10.5" y2="6.5"/></svg><span>Messages</span></div>
<div class="it" style="top:553.20px"><svg width="18" height="18" viewBox="0 0 18 18" fill="none" stroke="#c2c7d0" stroke-width="1.1" stroke-linecap="round" stroke-linejoin="round"><path d="M1 1.5 L17 1.5 L17 13 L11 13 L8.5 16.5 L6 13 L1 13 Z"/><path d="M9 4.5 L9.7 6.2 L11.4 6.3 L10.1 7.3 L10.5 9 L9 8 L7.5 9 L7.9 7.3 L6.6 6.3 L8.3 6.2 Z" fill="#c2c7d0"/><circle cx="4.5" cy="7.5" r="1" fill="#c2c7d0"/><circle cx="13.5" cy="7.5" r="1" fill="#c2c7d0"/></svg><span>Reviews</span></div>
<div class="it hd" style="top:595.05px"><span>Tools</span><svg class="chev" width="14" height="10" viewBox="0 0 14 10"><path d="M2 2 L7 7 L12 2" fill="none" stroke="#fff" stroke-width="3"/></svg></div>
<div class="it" style="top:636.90px"><svg width="18" height="18" viewBox="0 0 18 18" fill="none" stroke="#c2c7d0" stroke-width="1.1" stroke-linecap="round" stroke-linejoin="round"><path d="M1 17 L1 7 L6 7"/><path d="M6 17 L6 3 L10 3 L10 1 L13 1 L13 3 L17 3 L17 17 Z"/><line x1="1" y1="17" x2="17" y2="17"/><line x1="8.5" y1="6" x2="8.5" y2="15"/><line x1="11.5" y1="6" x2="11.5" y2="15"/><line x1="14.5" y1="6" x2="14.5" y2="15"/><line x1="3.5" y1="10" x2="3.5" y2="15"/></svg><span>Properties</span></div>
<div class="it" style="top:678.75px"><svg width="18" height="18" viewBox="0 0 18 18" fill="none" stroke="#c2c7d0" stroke-width="1.1" stroke-linecap="round" stroke-linejoin="round"><path d="M5 6 Q5 1 9 1 Q13 1 13 6"/><path d="M3.5 6 L14.5 6"/><circle cx="9" cy="8" r="2.6"/><path d="M3 17 L3 14 Q3 11 6.5 11 L11.5 11 Q15 11 15 14 L15 17 Z"/><path d="M7 17 L7 13.5 L11 13.5 L11 17"/><path d="M1.5 8 L3 6.5 M16.5 8 L15 6.5"/></svg><span>Manage User</span></div>
<div class="it" style="top:720.60px"><svg width="18" height="18" viewBox="0 0 18 18" fill="none" stroke="#c2c7d0" stroke-width="1.1" stroke-linecap="round" stroke-linejoin="round"><path d="M5 5.5 Q5 1 9 1 Q13 1 13 5.5"/><circle cx="9" cy="7" r="2"/><circle cx="4" cy="9.5" r="1.6"/><circle cx="14" cy="9.5" r="1.6"/><path d="M6 17 L6 12 Q9 9.5 12 12 L12 17"/><path d="M1 17 L1 13.5 Q2 11.5 4.5 11.8"/><path d="M17 17 L17 13.5 Q16 11.5 13.5 11.8"/><line x1="1" y1="17" x2="17" y2="17"/></svg><span>Manage Group User</span></div>
<div class="it" style="top:762.45px"><svg width="18" height="18" viewBox="0 0 18 18" fill="none" stroke="#c2c7d0" stroke-width="1.1" stroke-linecap="round" stroke-linejoin="round"><circle cx="4.5" cy="8" r="1.8"/><path d="M1 17 L1 13 Q1 10.5 4.5 10.5 Q8 10.5 8 13 L8 17 Z"/><circle cx="13.5" cy="3" r="1.8"/><path d="M10 12 L10 8 Q10 5.5 13.5 5.5 Q17 5.5 17 8 L17 12 Z"/><path d="M2 4 L7 4 M6 3 L7 4 L6 5"/><path d="M16 15 L11 15 M12 14 L11 15 L12 16"/></svg><span>PMS Connectivity</span></div>
<div class="it" style="top:804.30px"><svg width="18" height="18" viewBox="0 0 18 18" fill="none" stroke="#c2c7d0" stroke-width="1.1" stroke-linecap="round" stroke-linejoin="round"><path d="M4 3.2 A7.5 7.5 0 1 1 2.5 5.5"/><path d="M1.5 3 L4 3.2 L3.7 5.8"/><path d="M6 12 L6.5 9.8 L10.8 5.5 L12.5 7.2 L8.2 11.5 Z" fill="#c2c7d0"/></svg><span>ARI Log</span></div>
<div class="it" style="top:846.15px"><svg width="18" height="18" viewBox="0 0 18 18" fill="none" stroke="#c2c7d0" stroke-width="1.1" stroke-linecap="round" stroke-linejoin="round"><path d="M4 15.5 A7.8 7.8 0 1 1 8.5 16.9"/><path d="M3 13.5 L3.8 16 L6.2 15.5"/><rect x="5" y="5.5" width="8" height="6" rx="0.8"/><path d="M5 6 L9 9 L13 6"/></svg><span>Log Email</span></div>
<div class="it" style="top:888.00px"><svg width="18" height="18" viewBox="0 0 18 18" fill="none" stroke="#c2c7d0" stroke-width="1.1" stroke-linecap="round" stroke-linejoin="round"><line x1="1" y1="3" x2="17" y2="3"/><circle cx="4" cy="3" r="1.5"/><line x1="1" y1="9" x2="17" y2="9"/><circle cx="13" cy="9" r="1.5"/><line x1="1" y1="15" x2="17" y2="15"/><circle cx="8" cy="15" r="1.5"/></svg><span>Configurations</span></div>
  </div>
</div>
</body>
</html>
